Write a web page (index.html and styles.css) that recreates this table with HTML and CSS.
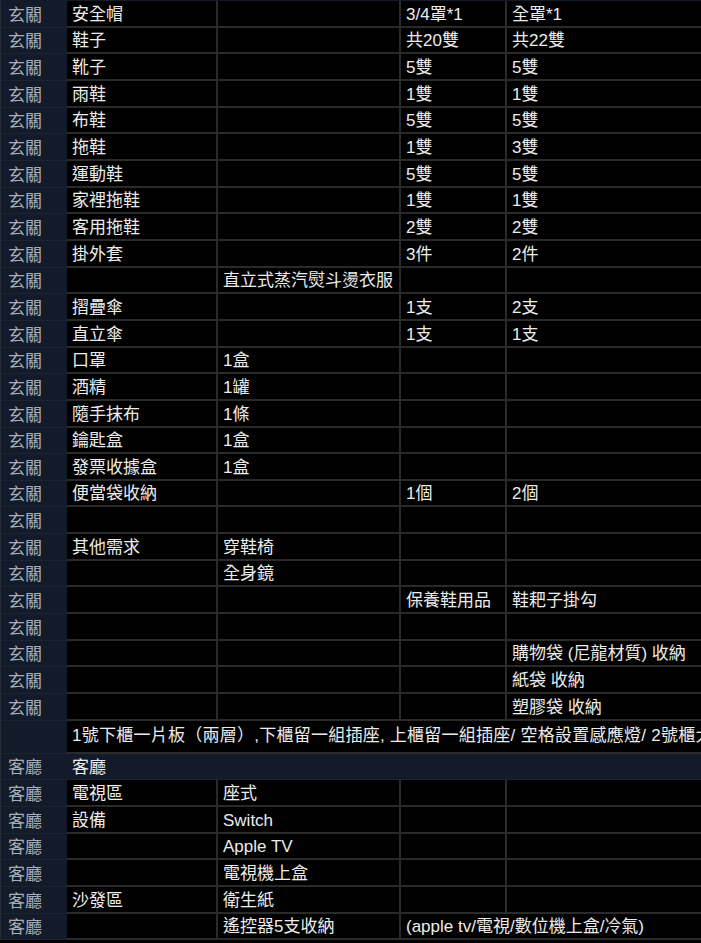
FILE: index.html
```html
<!DOCTYPE html>
<html lang="zh-Hant">
<head>
<meta charset="utf-8">
<title>玄關 / 客廳</title>
<link rel="stylesheet" href="styles.css">
</head>
<body>
<table class="sheet">
  <colgroup>
    <col class="c1"><col class="c2"><col class="c3"><col class="c4"><col class="c5">
  </colgroup>
  <tbody>
    <tr><td class="lbl">玄關</td><td>安全帽</td><td></td><td>3/4罩*1</td><td class="last">全罩*1</td></tr>
    <tr><td class="lbl">玄關</td><td>鞋子</td><td></td><td>共20雙</td><td class="last">共22雙</td></tr>
    <tr><td class="lbl">玄關</td><td>靴子</td><td></td><td>5雙</td><td class="last">5雙</td></tr>
    <tr><td class="lbl">玄關</td><td>雨鞋</td><td></td><td>1雙</td><td class="last">1雙</td></tr>
    <tr><td class="lbl">玄關</td><td>布鞋</td><td></td><td>5雙</td><td class="last">5雙</td></tr>
    <tr><td class="lbl">玄關</td><td>拖鞋</td><td></td><td>1雙</td><td class="last">3雙</td></tr>
    <tr><td class="lbl">玄關</td><td>運動鞋</td><td></td><td>5雙</td><td class="last">5雙</td></tr>
    <tr><td class="lbl">玄關</td><td>家裡拖鞋</td><td></td><td>1雙</td><td class="last">1雙</td></tr>
    <tr><td class="lbl">玄關</td><td>客用拖鞋</td><td></td><td>2雙</td><td class="last">2雙</td></tr>
    <tr><td class="lbl">玄關</td><td>掛外套</td><td></td><td>3件</td><td class="last">2件</td></tr>
    <tr><td class="lbl">玄關</td><td></td><td>直立式蒸汽熨斗燙衣服</td><td></td><td class="last"></td></tr>
    <tr><td class="lbl">玄關</td><td>摺疊傘</td><td></td><td>1支</td><td class="last">2支</td></tr>
    <tr><td class="lbl">玄關</td><td>直立傘</td><td></td><td>1支</td><td class="last">1支</td></tr>
    <tr><td class="lbl">玄關</td><td>口罩</td><td>1盒</td><td></td><td class="last"></td></tr>
    <tr><td class="lbl">玄關</td><td>酒精</td><td>1罐</td><td></td><td class="last"></td></tr>
    <tr><td class="lbl">玄關</td><td>隨手抹布</td><td>1條</td><td></td><td class="last"></td></tr>
    <tr><td class="lbl">玄關</td><td>鑰匙盒</td><td>1盒</td><td></td><td class="last"></td></tr>
    <tr><td class="lbl">玄關</td><td>發票收據盒</td><td>1盒</td><td></td><td class="last"></td></tr>
    <tr><td class="lbl">玄關</td><td>便當袋收納</td><td></td><td>1個</td><td class="last">2個</td></tr>
    <tr><td class="lbl">玄關</td><td></td><td></td><td></td><td class="last"></td></tr>
    <tr><td class="lbl">玄關</td><td>其他需求</td><td>穿鞋椅</td><td></td><td class="last"></td></tr>
    <tr><td class="lbl">玄關</td><td></td><td>全身鏡</td><td></td><td class="last"></td></tr>
    <tr><td class="lbl">玄關</td><td></td><td></td><td>保養鞋用品</td><td class="last">鞋耙子掛勾</td></tr>
    <tr><td class="lbl">玄關</td><td></td><td></td><td></td><td class="last"></td></tr>
    <tr><td class="lbl">玄關</td><td></td><td></td><td></td><td class="last">購物袋 (尼龍材質) 收納</td></tr>
    <tr><td class="lbl">玄關</td><td></td><td></td><td></td><td class="last">紙袋 收納</td></tr>
    <tr><td class="lbl">玄關</td><td></td><td></td><td></td><td class="last">塑膠袋 收納</td></tr>
    <tr class="tall"><td class="lbl"></td><td colspan="4" class="last wide">1號下櫃一片板（兩層）,下櫃留一組插座, 上櫃留一組插座/ 空格設置感應燈/ 2號櫃大</td></tr>
    <tr class="section"><td class="lbl">客廳</td><td colspan="4">客廳</td></tr>
    <tr><td class="lbl">客廳</td><td>電視區</td><td>座式</td><td></td><td class="last"></td></tr>
    <tr><td class="lbl">客廳</td><td>設備</td><td>Switch</td><td></td><td class="last"></td></tr>
    <tr><td class="lbl">客廳</td><td></td><td>Apple TV</td><td></td><td class="last"></td></tr>
    <tr><td class="lbl">客廳</td><td></td><td>電視機上盒</td><td></td><td class="last"></td></tr>
    <tr><td class="lbl">客廳</td><td>沙發區</td><td>衛生紙</td><td></td><td class="last"></td></tr>
    <tr><td class="lbl">客廳</td><td></td><td>遙控器5支收納</td><td colspan="2" class="last">(apple tv/電視/數位機上盒/冷氣)</td></tr>
  </tbody>
</table>
</body>
</html>
```

FILE: styles.css
```css
html, body {
  margin: 0;
  padding: 0;
  background: #000;
  overflow: hidden;
}

.sheet {
  border-collapse: separate;
  border-spacing: 0;
  table-layout: fixed;
  width: 701px;
  font-family: "Liberation Sans", "Noto Sans CJK TC", sans-serif;
  font-size: 17px;
  color: #ececec;
  border-top: 1px solid #131b2a;
}

.c1 { width: 67px; }
.c2 { width: 151px; }
.c3 { width: 183px; }
.c4 { width: 106px; }
.c5 { width: 194px; }

.sheet td {
  height: 26.67px;
  box-sizing: border-box;
  padding: 0 4px 1px 5px;
  line-height: 20px;
  vertical-align: bottom;
  white-space: nowrap;
  overflow: hidden;
  background: #000;
  border-right: 2px solid #2a2a2a;
  border-bottom: 2px solid #2a2a2a;
}

.sheet td.last {
  border-right: none;
}

.sheet td.wide {
  padding-right: 0;
  letter-spacing: 0.25px;
}

.sheet td.lbl {
  background: #131b2a;
  color: #a9afba;
  padding-left: 7px;
  border-right: none;
  border-bottom: 1px solid #1c2433;
  border-left: 1px solid #262d3a;
}

.sheet tr.tall td {
  height: 33px;
  vertical-align: middle;
  padding-bottom: 0;
}

.sheet tr.section td {
  background: #131b2a;
  border-right: none;
  border-bottom: 1px solid #1c2433;
}
```
